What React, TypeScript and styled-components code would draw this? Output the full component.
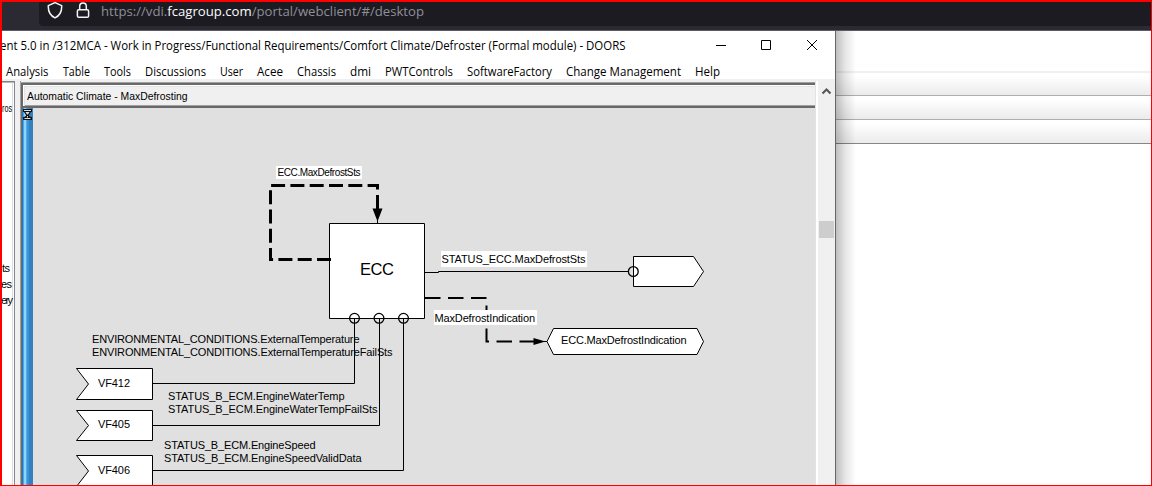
import React from 'react';
import styled, { createGlobalStyle } from 'styled-components';

const Global = createGlobalStyle`
  * { box-sizing: border-box; }
  body { margin: 0; overflow: hidden; }
`;

const Frame = styled.div`
  width: 1152px;
  height: 486px;
  border: solid #ff0000;
  border-width: 2px 1px 1px 2px;
  display: flex;
  flex-direction: column;
  background: #fff;
  overflow: hidden;
  font-family: 'Open Sans', 'Noto Sans', sans-serif;
`;

const BrowserBar = styled.div`
  flex: 0 0 29px;
  background: #2b2a33;
  border-bottom: 1px solid #5b5a66;
  padding: 0 0 4px 37px;
`;

const UrlField = styled.div`
  height: 24px;
  background: #1c1b22;
  border-bottom-left-radius: 4px;
  display: flex;
  align-items: flex-start;
  padding-left: 7px;
`;

const Glyph = styled.svg<{ $gap: number }>`
  flex: none;
  margin-right: ${(p) => p.$gap}px;
  display: block;
`;

const Fitted = styled.svg`
  display: block;
  flex: none;
  overflow: visible;
`;

const Body = styled.div`
  flex: 1;
  min-height: 0;
  display: flex;
`;

const DoorsWindow = styled.section`
  flex: 0 0 834px;
  border-right: 1px solid #666;
  background: #f0f0f0;
  display: flex;
  flex-direction: column;
`;

const TitleBar = styled.header`
  flex: 0 0 29px;
  background: #fff;
  display: flex;
  overflow: hidden;
`;

const TitleSlot = styled.div`
  width: 696px;
`;

const MenuBar = styled.nav`
  flex: 0 0 19px;
  background: #fff;
  display: flex;
  gap: 14px;
  padding-left: 4px;
`;

const WorkArea = styled.div`
  flex: 1;
  min-height: 0;
  display: flex;
  padding-top: 2px;
`;

const TreePane = styled.aside`
  flex: 0 0 13px;
  background: #fff;
  border-top: 1px solid #828282;
  border-right: 1px solid #828790;
  box-shadow: inset 0 1px #b8b8b8, inset -1px 0 #fff, inset -2px 0 #dcdcdc;
  overflow: hidden;
`;

const Content = styled.main`
  flex: 0 0 795px;
  margin-left: 5px;
  display: flex;
  flex-direction: column;
  border-left: 1px solid #a0a0a0;
`;

const Header = styled.div`
  flex: 0 0 25px;
  margin-top: 2px;
  border: solid #696969;
  border-width: 2px 0 2px 2px;
  box-shadow: 0 -1px #a0a0a0, inset 1px 1px #fff, inset 2px 2px #e3e3e3, inset 0 -1px #a0a0a0;
  padding-left: 3px;
`;

const Sheet = styled.div`
  flex: 1;
  min-height: 0;
  display: flex;
  background: #e0e0e0;
`;

const BlueRail = styled.div`
  flex: 0 0 12px;
  background: linear-gradient(90deg, #696969 0 1px, #2877b4 1px 2px, #4ba4e4 2px 3px, #86d8ff 3px 5px, #55aeea 5px 6px, #3d92d6 6px 8px, #3280c0 8px 12px);
  padding: 1px 0 0 2px;
`;

const Diagram = styled.svg`
  display: block;
  flex: none;
  font-family: 'Liberation Sans', Arial, sans-serif;
  font-size: 11px;
`;

const ScrollBar = styled.div`
  flex: 1;
  display: flex;
  flex-direction: column;
  border-left: 1px solid #e3e3e3;
  box-shadow: inset 2px 0 #fff;
  padding-left: 3px;
`;

const Thumb = styled.div`
  height: 17px;
  width: 15px;
  margin-top: 122px;
  background: #cdcdcd;
`;

const Backdrop = styled.section`
  flex: 1;
  position: relative;
  background: #fff;
  padding-top: 40px;
`;

const Shade = styled.div`
  position: absolute;
  inset: 0 auto 0 0;
  width: 20px;
  background: linear-gradient(90deg, rgba(0,0,0,.25), rgba(0,0,0,.1) 45%, rgba(0,0,0,0));
`;

const Band = styled.div<{ $line: string; $first?: boolean }>`
  height: 24px;
  border-top: ${(p) => (p.$first ? '2px solid #f0f0f0' : '0')};
  ${(p) => p.$first && 'height: 25px;'}
  border-bottom: 1px solid ${(p) => p.$line};
  background: linear-gradient(#fff 15%, #ebebeb);
`;

type FitProps = { w: number; h: number; base: number; size?: number; x?: number; fill?: string; family?: string; children: React.ReactNode };

function FitText({ w, h, base, size = 12, x = 0, fill = '#000', family, children }: FitProps) {
  return (
    <Fitted width={w + x} height={h}>
      <text x={x} y={base} fontSize={size} fill={fill} fontFamily={family} textLength={w} lengthAdjust="spacingAndGlyphs">
        {children}
      </text>
    </Fitted>
  );
}

const menus: [string, number][] = [
  ['Analysis', 42.5], ['Table', 27], ['Tools', 27], ['Discussions', 61], ['User', 23],
  ['Acee', 26], ['Chassis', 39], ['dmi', 21], ['PWTControls', 68],
  ['SoftwareFactory', 85], ['Change Management', 115], ['Help', 25],
];

type Label = { t: string; x: number; y: number; w: number; s?: number };

const labels: Label[] = [
  { t: 'ECC.MaxDefrostSts', x: 277.5, y: 176, w: 83, s: 10 },
  { t: 'ECC', x: 360, y: 275, w: 34, s: 16.5 },
  { t: 'STATUS_ECC.MaxDefrostSts', x: 441.5, y: 263, w: 144 },
  { t: 'MaxDefrostIndication', x: 434.5, y: 322, w: 100.5 },
  { t: 'ECC.MaxDefrostIndication', x: 561, y: 344, w: 125.5 },
  { t: 'ENVIRONMENTAL_CONDITIONS.ExternalTemperature', x: 92, y: 343, w: 267.5 },
  { t: 'ENVIRONMENTAL_CONDITIONS.ExternalTemperatureFailSts', x: 92, y: 356, w: 300.5 },
  { t: 'STATUS_B_ECM.EngineWaterTemp', x: 168, y: 400, w: 176.5 },
  { t: 'STATUS_B_ECM.EngineWaterTempFailSts', x: 168, y: 413, w: 209.5 },
  { t: 'STATUS_B_ECM.EngineSpeed', x: 164, y: 449, w: 151.5 },
  { t: 'STATUS_B_ECM.EngineSpeedValidData', x: 164, y: 462, w: 197.5 },
  { t: 'VF412', x: 98, y: 387, w: 32 },
  { t: 'VF405', x: 98, y: 428, w: 32 },
  { t: 'VF406', x: 98, y: 474, w: 32 },
];

export default function App() {
  return (
    <Frame>
      <Global />
      <BrowserBar>
        <UrlField>
          <Glyph $gap={12} width="18" height="20" viewBox="46 2 18 20" fill="none" stroke="#f4f4f6" strokeWidth="1.5" strokeLinejoin="round">
            <path d="M55 2.6 L61.7 5.6 C62 11.500 59.6 15.700 55 17.900 C50.4 15.700 48 11.500 48.3 5.6 Z" />
          </Glyph>
          <Glyph $gap={10} width="14" height="20" viewBox="76 2 14 20" fill="none" stroke="#f4f4f6" strokeWidth="1.5">
            <rect x="77.4" y="9.7" width="11.2" height="7.6" rx="1.4" />
            <path d="M79.700 9.700V6.300a3.300 3.300 0 0 1 6.600 0v3.400" />
          </Glyph>
          <FitText w={323} h={22} base={14} size={13} x={1} fill="#8f8f98">
            https://vdi.<tspan fill="#fbfbfe">fcagroup.com</tspan>/portal/webclient/#/desktop
          </FitText>
        </UrlField>
      </BrowserBar>
      <Body>
        <DoorsWindow>
          <TitleBar>
            <TitleSlot>
              <FitText w={625.5} h={29} base={19} x={-2}>
                ent 5.0 in /312MCA - Work in Progress/Functional Requirements/Comfort Climate/Defroster (Formal module) - DOORS
              </FitText>
            </TitleSlot>
            <Glyph $gap={0} width="130" height="29" viewBox="698 31 130 29" fill="none" stroke="#000">
              <path d="M716 45.5h10M761.5 40.5h9v9h-9zM807 40l10 10M817 40l-10 10" />
            </Glyph>
          </TitleBar>
          <MenuBar>
            {menus.map(([name, w]) => (
              <FitText key={name} w={w} h={19} base={15.5}>{name}</FitText>
            ))}
          </MenuBar>
          <WorkArea>
            <TreePane>
              <Fitted width="10" height="400" viewBox="2 82 10 400" fontFamily="Liberation Sans" fontSize="11">
                <text x="2" y="112" textLength="10" lengthAdjust="spacingAndGlyphs">ros</text>
                <text x="2" y="272" textLength="8">ts</text>
                <text x="1" y="288" textLength="11">es</text>
                <text x="1" y="304" textLength="12">ery</text>
              </Fitted>
            </TreePane>
            <Content>
              <Header>
                <FitText w={160.5} h={20} base={15} size={11.5} x={1} family="Liberation Sans">Automatic Climate - MaxDefrosting</FitText>
              </Header>
              <Sheet>
                <BlueRail>
                  <Glyph $gap={0} width="9" height="11" viewBox="0 0 9 11">
                    <path d="M0 0h9v3H8L6 6v1l2 1h1v3H0V8h1l2-1V6L1 3H0z" fill="#111" />
                    <path d="M1 1h7v1H1zM2.500 3h4L5 5.500H4zM1.500 9h6v1h-6zM4 7h1v1.500H4z" fill="#ddd" />
                  </Glyph>
                </BlueRail>
                <Diagram width="782" height="377" viewBox="33 108 782 377" fill="#fff" stroke="#000">
                  <path d="M329.500 223.500h95v95h-95zM633.500 256.500h60l10 15-10 15h-60zM547 341.500l6.500-13H697l6.500 13-6.500 13H553.500z" />
                  <path d="M76.500 368.500h76v31h-76l12-15.500zM76.500 410.500h76v30h-76l12-15zM76.500 455.500h76v31h-76l12-15.500z" />
                  <g fill="none">
                    <path d="M354.500 318v65.500h-202M379.500 318v107.500h-227M403.500 318v152.500h-251" />
                    <path d="M424.500 272.500h14v-1h190" />
                    <path d="M331 259.500H270.500V185.500H377.500V209" strokeWidth="3" strokeDasharray="14 5.3" />
                    <path d="M425 298H486.500V341.500H535" strokeWidth="2" strokeDasharray="15.500 7.500" />
                    <path d="M377.500 220v4M543 341.500h4" />
                    <g strokeWidth="1.300">
                      <circle cx="354.500" cy="318.300" r="4.900" />
                      <circle cx="379" cy="318.300" r="4.900" />
                      <circle cx="403.500" cy="318.300" r="4.900" />
                      <circle cx="633.300" cy="271.500" r="4.900" />
                    </g>
                  </g>
                  <path d="M372.500 208.500h10l-5 13zM533.500 338v7l12-3.500z" fill="#000" stroke="none" />
                  <path d="M276 166h86v13h-86zM441 251h146v16H441zM434 310h103v15H434z" stroke="none" />
                  <g fill="#000" stroke="none">
                    {labels.map((l) => (
                      <text key={l.t} x={l.x} y={l.y} fontSize={l.s ?? 11} textLength={l.w}>{l.t}</text>
                    ))}
                  </g>
                </Diagram>
              </Sheet>
            </Content>
            <ScrollBar>
              <Glyph $gap={0} width="16" height="18" viewBox="819 81 16 18" fill="none" stroke="#555" strokeWidth="2">
                <path d="M822.500 93.500l4-4 4 4" />
              </Glyph>
              <Thumb />
            </ScrollBar>
          </WorkArea>
        </DoorsWindow>
        <Backdrop>
          <Band $first $line="#aeaeb2" />
          <Band $line="#aeaeb2" />
          <Band $line="#85858c" />
          <Shade />
        </Backdrop>
      </Body>
    </Frame>
  );
}
